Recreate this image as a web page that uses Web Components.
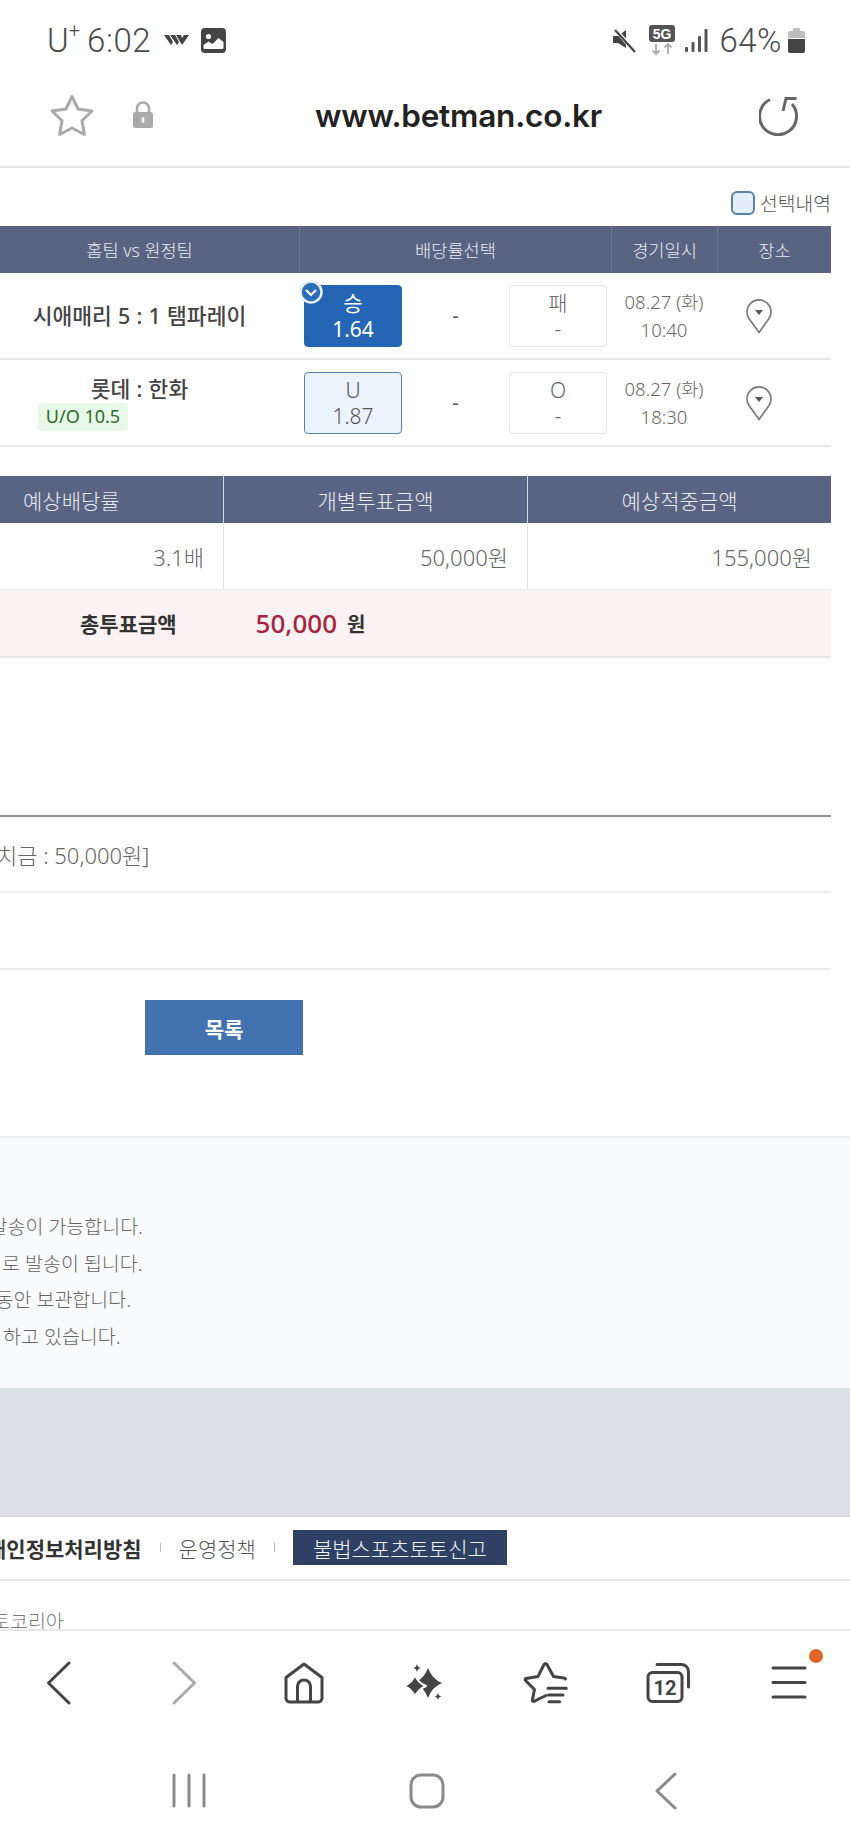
<!DOCTYPE html>
<html lang="ko">
<head>
<meta charset="utf-8">
<title>betman</title>
<style>
  html, body { margin: 0; padding: 0; background: #fff; }
  body { width: 850px; height: 1842px; overflow: hidden; font-family: "Noto Sans", "Noto Sans CJK KR", sans-serif; color: #555; }
  #page { display: flex; flex-direction: column; width: 850px; height: 1842px; overflow: hidden; }
</style>
</head>
<body>
<div id="page">
  <status-bar></status-bar>
  <browser-bar></browser-bar>
  <bet-slip>
    <match-row date="08.27 (화)" time="10:40">
      <span slot="match">시애매리 5 : 1 탬파레이</span>
      <odds-button slot="home" variant="picked"><span slot="label">승</span><span slot="price">1.64</span></odds-button>
      <odds-button slot="away"><span slot="label">패</span><span slot="price">-</span></odds-button>
    </match-row>
    <match-row date="08.27 (화)" time="18:30" tag="U/O 10.5">
      <span slot="match">롯데 : 한화</span>
      <odds-button slot="home" variant="light"><span slot="label">U</span><span slot="price">1.87</span></odds-button>
      <odds-button slot="away"><span slot="label">O</span><span slot="price">-</span></odds-button>
    </match-row>
  </bet-slip>
  <bet-summary></bet-summary>
  <bet-details></bet-details>
  <notice-box></notice-box>
  <site-footer></site-footer>
  <browser-toolbar></browser-toolbar>
  <system-nav></system-nav>
</div>

<script>
class StatusBar extends HTMLElement {
  connectedCallback() {
    this.attachShadow({mode: 'open'}).innerHTML = `
    <style>
    :host { display: flex; align-items: center; height: 80px; padding: 0 45px 0 47px; box-sizing: border-box; flex: none;
      font-family: Roboto, sans-serif; font-weight: 300; font-size: 33px; color: #4a4a4a; }
    .left, .right { display: flex; align-items: center; }
    .right { margin-left: auto; }
    sup { font-size: 20px; line-height: 0; position: relative; top: -3px; vertical-align: super; }
    svg { display: block; }
    .b { font: 700 14px "Liberation Sans", sans-serif; }
    </style>
    <div class="left">
      <span>U<sup>+</sup></span><span style="margin-left:7px;letter-spacing:.6px">6:02</span>
      <svg style="margin-left:12px" width="27" height="14" viewBox="0 0 27 14"><path d="M1 2l7 10 2-3-4-7zM7 2l7 10 2-3-4-7zM13 2l6 10 7-10h-5l-2 3-1-3z" fill="#444"/></svg>
      <svg style="margin-left:11px" width="25" height="25" viewBox="0 0 25 25"><rect width="25" height="25" rx="4" fill="#444"/><circle cx="7.500" cy="8.500" r="2.600" fill="#fff"/><path d="M2.500 20v-3l5-3.500 4 2.500 6-6 5 4v6a1 1 0 0 1-1 1h-18a1 1 0 0 1-1-1z" fill="#fff"/></svg>
    </div>
    <div class="right">
      <svg width="25" height="25" viewBox="0 0 25 25"><path d="M1 8h5l8-6v18l-8-5H1z" fill="#444"/><path d="M3 1l20 23" stroke="#fff" stroke-width="4"/><path d="M3 2l20 22" stroke="#444" stroke-width="2.200"/></svg>
      <svg style="margin-left:12px" width="26" height="30" viewBox="0 0 26 30"><rect width="26" height="17" rx="3" fill="#555"/><text class="b" x="13" y="13.500" text-anchor="middle" fill="#fff">5G</text><path d="M7 19v10M3.500 25.500L7 29l3.500-3.500M19 29V19M15.500 22.500L19 19l3.500 3.500" fill="none" stroke="#aaa" stroke-width="1.800"/></svg>
      <svg style="margin-left:10px" width="23" height="23" viewBox="0 0 23 23"><rect x="0" y="18" width="3" height="5" rx="1" fill="#555"/><rect x="6.500" y="13" width="3" height="10" rx="1" fill="#555"/><rect x="13" y="7" width="3" height="16" rx="1" fill="#555"/><rect x="19.500" y="0" width="3" height="23" rx="1" fill="#555"/></svg>
      <span style="margin-left:11px;letter-spacing:.5px">64%</span>
      <svg style="margin-left:6px" width="17" height="25" viewBox="0 0 17 25"><path d="M5 0h7v3h3a2 2 0 0 1 2 2v5H0V5a2 2 0 0 1 2-2h3z" fill="#bdbdbd"/><path d="M0 11h17v12a2 2 0 0 1-2 2H2a2 2 0 0 1-2-2z" fill="#444"/></svg>
    </div>`;
  }
}
customElements.define('status-bar', StatusBar);

class BrowserBar extends HTMLElement {
  connectedCallback() {
    this.attachShadow({mode: 'open'}).innerHTML = `
    <style>
    :host { display: grid; grid-template-columns: 315px auto 1fr; align-items: center; height: 88px; box-sizing: border-box; flex: none;
      padding-bottom: 16px; border-bottom: 2px solid #e6e6e6; }
    .l { display: flex; align-items: center; padding-left: 49px; }
    .r { display: flex; justify-content: flex-end; padding-right: 49px; }
    .url { font: 600 31.500px Inter, "Noto Sans", sans-serif; color: #222; letter-spacing: -.2px; }
    svg { display: block; }
    </style>
    <div class="l">
      <svg width="46" height="44" viewBox="0 0 46 44"><path d="M23 3.500l6 12.500 14 2-10 9.800 2.400 13.700L23 35l-12.400 6.500L13 27.800 3 18l14-2z" fill="none" stroke="#aaa" stroke-width="3" stroke-linejoin="round"/></svg>
      <svg style="margin-left:37px" width="22" height="28" viewBox="0 0 22 28"><path d="M5 12V7.500a6 6 0 0 1 12 0V12" fill="none" stroke="#aaa" stroke-width="2.600"/><rect x="1" y="11" width="20" height="16" rx="2.500" fill="#aaa"/><path d="M11 16.500v5" stroke="#fff" stroke-width="2.600"/></svg>
    </div>
    <div class="url">www.betman.co.kr</div>
    <div class="r">
      <svg width="42" height="42" viewBox="0 0 42 42"><path d="M11 5.500A18.500 18.500 0 1 0 33 10" fill="none" stroke="#666" stroke-width="3"/><path d="M37.500 4.500H27L24 17" fill="none" stroke="#666" stroke-width="3"/></svg>
    </div>`;
  }
}
customElements.define('browser-bar', BrowserBar);

class BetSlip extends HTMLElement {
  connectedCallback() {
    this.attachShadow({mode: 'open'}).innerHTML = `
    <style>
    :host { display: block; flex: none; padding-right: 19px; }
    .pick { display: flex; align-items: center; justify-content: flex-end; height: 58px; box-sizing: border-box; padding-top: 12px; font-size: 19.300px; font-weight: 300; color: #555; }
    .box { width: 20px; height: 20px; border: 2px solid #5a80a8; border-radius: 6px; background: #e4eefb; margin-right: 5px; }
    .head { display: grid; grid-template-columns: 299px 312px 106px 114px; height: 47px; background: #596483; color: #e9ebf1; font-size: 17.600px; font-weight: 300; }
    .head div { display: flex; align-items: center; justify-content: center; border-left: 1px solid #6f7993; }
    .head div:first-child { border-left: 0; padding-right: 20px; }
    </style>
    <div class="pick"><span class="box"></span>선택내역</div>
    <div class="head"><div>홈팀 vs 원정팀</div><div>배당률선택</div><div>경기일시</div><div>장소</div></div>
    <slot></slot>`;
  }
}
customElements.define('bet-slip', BetSlip);

class MatchRow extends HTMLElement {
  connectedCallback() {
    const tag = this.getAttribute('tag');
    this.attachShadow({mode: 'open'}).innerHTML = `
    <style>
    :host { display: grid; grid-template-columns: 299px 312px 106px 114px; height: 87px; box-sizing: border-box; border-bottom: 2px solid #e8e8e8; align-items: center; }
    .match { display: flex; flex-direction: column; align-items: center; padding-right: 20px; font-size: 21.500px; font-weight: 500; color: #444; line-height: 26px; word-spacing: .6px; }
    .tag { align-self: flex-start; margin: 1px 0 -1px 38px; width: 90px; height: 28px; line-height: 27px; text-align: center; background: #e8f8e8; border-radius: 4px; font-size: 18px; font-weight: 400; color: #2f6b2f; word-spacing: 0; }
    .odds { display: grid; grid-template-columns: 98px 1fr 98px; align-items: center; padding: 0 4px 0 5px; text-align: center; font-size: 20px; color: #555; }
    .when { text-align: center; font-size: 18.500px; font-weight: 300; color: #666; line-height: 28px; }
    .pin { display: flex; justify-content: center; padding-right: 30px; }
    svg { display: block; }
    </style>
    <div class="match"><slot name="match"></slot>${tag ? `<div class="tag">${tag}</div>` : ''}</div>
    <div class="odds"><slot name="home"></slot><span>-</span><slot name="away"></slot></div>
    <div class="when">${this.getAttribute('date')}<br>${this.getAttribute('time')}</div>
    <div class="pin">
      <svg width="28" height="36" viewBox="0 0 28 36"><path d="M14 34.500L4 20.500A12 12 0 1 1 24 20.500z" fill="none" stroke="#777" stroke-width="1.600" stroke-linejoin="round"/><path d="M10 12h8L14 17z" fill="#555"/></svg>
    </div>`;
  }
}
customElements.define('match-row', MatchRow);

class OddsButton extends HTMLElement {
  connectedCallback() {
    const picked = this.getAttribute('variant') === 'picked';
    this.attachShadow({mode: 'open'}).innerHTML = `
    <style>
    :host { display: flex; flex-direction: column; align-items: center; justify-content: center; position: relative; width: 98px; height: 62px; box-sizing: border-box;
      border: 1px solid #e4e4e4; border-radius: 4px; background: #fff; color: #666; font-size: 21px; font-weight: 300; line-height: 26px; }
    :host([variant="light"]) { background: #eaf2fb; border-color: #5a80a8; color: #555; }
    :host([variant="picked"]) { background: #2566b4; border-color: #2566b4; color: #fff; font-weight: 400; }
    .check { position: absolute; left: -6px; top: -6px; width: 24px; height: 24px; }
    </style>
    <slot name="label"></slot><slot name="price"></slot>
    ${picked ? `<svg class="check" viewBox="0 0 24 24"><circle cx="12" cy="12" r="10.500" fill="#2c6db8" stroke="#e9eff7" stroke-width="2.500"/><path d="M7 10l5 5 5-5" fill="none" stroke="#fff" stroke-width="2.200"/></svg>` : ''}`;
  }
}
customElements.define('odds-button', OddsButton);

class BetSummary extends HTMLElement {
  connectedCallback() {
    this.attachShadow({mode: 'open'}).innerHTML = `
    <style>
    :host { display: block; flex: none; margin-top: 29px; padding-right: 19px; }
    .row { display: grid; grid-template-columns: 223px 304px 304px; }
    .head { height: 47px; background: #596483; color: #e9ebf1; font-size: 21px; font-weight: 300; }
    .head div { display: flex; align-items: center; justify-content: center; border-left: 1px solid #d5d9e2; }
    .head div:first-child { border-left: 0; justify-content: flex-start; padding-left: 23px; }
    .body { height: 66px; font-size: 22px; font-weight: 300; color: #666; }
    .body div { display: flex; align-items: center; justify-content: flex-end; padding-right: 19px; border-left: 1px solid #e2e2e2; }
    .body div:first-child { border-left: 0; }
    .total { display: flex; align-items: center; height: 69px; box-sizing: border-box; background: #faf2f3; border-top: 1px solid #ececec; border-bottom: 2px solid #e8e8e8; font-weight: 700; color: #333; font-size: 21px; }
    .total b { font-weight: 500; font-size: 26px; color: #a8233f; margin-left: 79px; }
    .total i { font-style: normal; margin-left: 10px; font-size: 20px; }
    .total span:first-child { margin-left: 80px; }
    </style>
    <div class="row head"><div>예상배당률</div><div>개별투표금액</div><div>예상적중금액</div></div>
    <div class="row body"><div>3.1배</div><div>50,000원</div><div>155,000원</div></div>
    <div class="total"><span>총투표금액</span><b>50,000</b><i>원</i></div>`;
  }
}
customElements.define('bet-summary', BetSummary);

class BetDetails extends HTMLElement {
  connectedCallback() {
    this.attachShadow({mode: 'open'}).innerHTML = `
    <style>
    :host { display: block; flex: none; margin-top: 157px; }
    .r { height: 77px; box-sizing: border-box; display: flex; align-items: center; border-bottom: 2px solid #ececec; margin-right: 19px; font-size: 22px; font-weight: 300; color: #666; overflow: hidden; }
    .first { border-top: 2px solid #8e939c; height: 78px; }
    .r span { margin-left: -3px; white-space: nowrap; }
    .act { display: flex; height: 166px; box-sizing: border-box; padding: 30px 0 0 145px; }
    .btn { width: 158px; height: 55px; background: #4272b0; color: #fff; font-size: 21px; font-weight: 700; display: flex; align-items: center; justify-content: center; }
    </style>
    <div class="r first"><span>치금 : 50,000원]</span></div>
    <div class="r"></div>
    <div class="act"><div class="btn">목록</div></div>`;
  }
}
customElements.define('bet-details', BetDetails);

class NoticeBox extends HTMLElement {
  connectedCallback() {
    this.attachShadow({mode: 'open'}).innerHTML = `
    <style>
    :host { display: block; flex: none; height: 252px; box-sizing: border-box; padding-top: 71px; background: #f9fafc; border-top: 2px solid #ececec; overflow: hidden; font-size: 19.500px; font-weight: 300; color: #666; line-height: 36.500px; }
    div { white-space: nowrap; }
    </style>
    <div style="margin-left:-10.500px">발송이 가능합니다.</div>
    <div style="margin-left:2px">로 발송이 됩니다.</div>
    <div style="margin-left:-4.500px">동안 보관합니다.</div>
    <div style="margin-left:3px">하고 있습니다.</div>`;
  }
}
customElements.define('notice-box', NoticeBox);

class SiteFooter extends HTMLElement {
  connectedCallback() {
    this.attachShadow({mode: 'open'}).innerHTML = `
    <style>
    :host { display: block; flex: none; height: 241px; overflow: hidden; }
    .gray { height: 128px; background: #dde0e5; border-bottom: 1px solid #d0d3d8; }
    .links { display: flex; align-items: center; height: 64px; box-sizing: border-box; border-bottom: 2px solid #e8e8e8; font-size: 21px; font-weight: 300; color: #555; white-space: nowrap; padding-bottom: 1px; }
    .links b { font-weight: 700; color: #333; margin-left: -13px; }
    .sep { width: 1px; height: 9px; background: #bbb; margin: 0 18px; }
    .report { display: flex; align-items: center; justify-content: center; width: 214px; height: 35px; background: #2f4065; color: #f0f2f6; }
    .copy { height: 48px; overflow: hidden; font-size: 19.500px; font-weight: 300; color: #777; line-height: 82px; white-space: nowrap; margin-left: -8px; }
    </style>
    <div class="gray"></div>
    <div class="links"><b>개인정보처리방침</b><span class="sep"></span><span>운영정책</span><span class="sep"></span><span class="report">불법스포츠토토신고</span></div>
    <div class="copy">토코리아</div>`;
  }
}
customElements.define('site-footer', SiteFooter);

class BrowserToolbar extends HTMLElement {
  connectedCallback() {
    this.attachShadow({mode: 'open'}).innerHTML = `
    <style>
    :host { display: grid; grid-template-columns: repeat(7, 1fr); justify-items: center; flex: none; height: 132px; box-sizing: border-box; padding-top: 22px; border-top: 2px solid #e8e8e8; position: relative; }
    svg { display: block; width: 60px; height: 60px; }
    svg * { fill: none; stroke: #444; stroke-width: 3; stroke-linecap: round; stroke-linejoin: round; }
    svg .f { fill: #444; stroke: none; }
    .tabs { font: 700 20px Roboto, sans-serif; fill: #444; stroke: none; }
    .dot { position: absolute; left: 809px; top: 18px; width: 14px; height: 14px; border-radius: 50%; background: #e0662a; }
    </style>
    <svg viewBox="0 0 60 60"><path d="M38 10L17.500 30 38 50"/></svg>
    <svg viewBox="0 0 60 60"><path style="stroke:#aaa" d="M22 10l20.500 20L22 50"/></svg>
    <svg viewBox="0 0 60 60"><path d="M12 45V24.500L30 11l18 13.500V45a4 4 0 0 1-4 4H16a4 4 0 0 1-4-4z"/><path d="M23.500 48V33.500a6.500 6.500 0 0 1 13 0V48"/></svg>
    <svg viewBox="0 0 60 60"><path class="f" d="M33 15Q37 26 47 30 37 34 33 45 29 34 19 30 29 26 33 15z"/><path class="f" style="stroke:#fff;stroke-width:2" d="M20 22Q23 30 31 33 23 36 20 44 17 36 9 33 17 30 20 22z"/><path class="f" d="M22 11c.6 2.500 1.500 3.400 4 4-2.500.6-3.400 1.500-4 4-.6-2.500-1.500-3.400-4-4 2.500-.6 3.400-1.500 4-4z"/><path class="f" d="M43 40c.5 2 1.200 2.700 3.500 3.500-2.300.8-3 1.500-3.500 3.500-.5-2-1.200-2.700-3.500-3.500 2.300-.8 3-1.500 3.500-3.500z"/></svg>
    <svg viewBox="0 0 60 60"><path d="M49.500 26Q49 25 48 25L37.500 23.500 31 11.500Q29.500 9.500 28 11.500L22 23.500 10 25.500Q8.500 26 9.500 27.500L18.500 36.500 16.300 47Q16.300 49 18 48.300L30 42.500"/><path d="M32 35.300h18.300M32.500 42h14.500M33 48.700h10.600"/></svg>
    <svg viewBox="0 0 60 60"><path d="M19 11.500h24.500a7 7 0 0 1 7 7V34"/><rect x="10" y="19.500" width="34" height="29" rx="4.500"/><text class="tabs" x="27" y="42" text-anchor="middle">12</text></svg>
    <svg viewBox="0 0 60 60"><path d="M14 15h32M14 29.500h32M14 44h32"/></svg>
    <span class="dot"></span>`;
  }
}
customElements.define('browser-toolbar', BrowserToolbar);

class SystemNav extends HTMLElement {
  connectedCallback() {
    this.attachShadow({mode: 'open'}).innerHTML = `
    <style>
    :host { display: flex; flex: 1; gap: 178px; padding-left: 159px; box-sizing: border-box; align-items: flex-start; }
    svg { display: block; width: 60px; height: 60px; }
    svg * { fill: none; stroke: #8a8a8a; stroke-width: 3; stroke-linecap: round; stroke-linejoin: round; }
    </style>
    <svg viewBox="0 0 60 60"><path d="M15 14v31M30 14v31M45 14v31"/></svg>
    <svg viewBox="0 0 60 60"><rect x="14" y="14" width="32" height="32" rx="10"/></svg>
    <svg viewBox="0 0 60 60"><path d="M40 13L22 30l18 17"/></svg>`;
  }
}
customElements.define('system-nav', SystemNav);
</script>
</body>
</html>
